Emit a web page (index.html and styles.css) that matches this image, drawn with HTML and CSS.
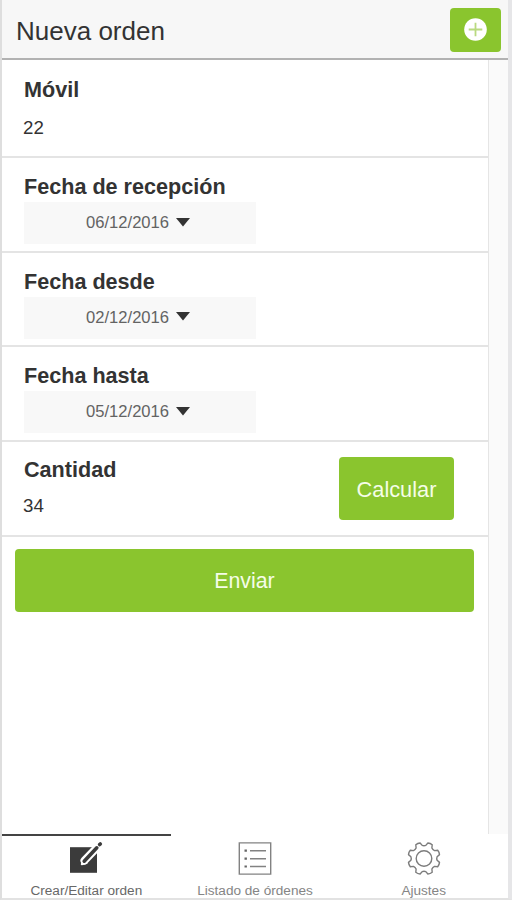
FILE: index.html
```html
<!DOCTYPE html>
<html lang="es">
<head>
<meta charset="utf-8">
<title>Nueva orden</title>
<link rel="stylesheet" href="styles.css">
</head>
<body>
<div class="app">
  <header class="header">
    <h1 class="title">Nueva orden</h1>
    <button class="add" aria-label="Agregar">
      <svg width="24" height="24" viewBox="0 0 24 24"><circle cx="11.5" cy="11.5" r="11.3" fill="#fff"/><path d="M11.5 4.7v13.6M4.7 11.5h13.6" stroke="#b9da80" stroke-width="1.8"/></svg>
    </button>
  </header>
  <main class="content">
    <div class="form">
      <section class="row row-first">
        <h2 class="label">Móvil</h2>
        <p class="value">22</p>
      </section>
      <section class="row row-date">
        <h2 class="label">Fecha de recepción</h2>
        <div class="date"><span>06/12/2016</span><svg class="caret" width="14" height="9" viewBox="0 0 14 9"><path d="M0 0h14L7 8.5z"/></svg></div>
      </section>
      <section class="row row-date">
        <h2 class="label">Fecha desde</h2>
        <div class="date"><span>02/12/2016</span><svg class="caret" width="14" height="9" viewBox="0 0 14 9"><path d="M0 0h14L7 8.5z"/></svg></div>
      </section>
      <section class="row row-date">
        <h2 class="label">Fecha hasta</h2>
        <div class="date"><span>05/12/2016</span><svg class="caret" width="14" height="9" viewBox="0 0 14 9"><path d="M0 0h14L7 8.5z"/></svg></div>
      </section>
      <section class="row row-amount">
        <div>
          <h2 class="label">Cantidad</h2>
          <p class="value">34</p>
        </div>
        <button class="button calc">Calcular</button>
      </section>
      <button class="button send">Enviar</button>
    </div>
    <div class="gutter"></div>
  </main>
  <nav class="tabs">
    <a class="tab active">
      <svg width="34" height="34" viewBox="0 0 34 34"><path d="M1 6.2h27v25.6H1z" fill="#3b3b3b"/><path d="M15.5 19.5L28 6.5" stroke="#fff" stroke-width="8" stroke-linecap="round"/><path d="M12.8 23.2l1.2-4.2L17.5 22z" fill="#fff" stroke="#fff" stroke-width="2" stroke-linejoin="round"/><path d="M15.2 20.2L27.8 6.8M30.6 3.6l.7-.7" fill="none" stroke="#3b3b3b" stroke-width="3.6" stroke-linecap="round"/></svg>
      <span>Crear/Editar orden</span>
    </a>
    <a class="tab">
      <svg width="34" height="34" viewBox="0 0 34 34" fill="none" stroke="#828282" stroke-width="1.4"><path d="M1.3 1.9h31.4v31.2H1.3z"/><path d="M12 9.7h16M12 17.7h16M12 25.5h16"/><path d="M6.5 9.7h2.4M6.5 17.7h2.4M6.5 25.5h2.4" stroke="#666" stroke-width="2.2"/></svg>
      <span>Listado de órdenes</span>
    </a>
    <a class="tab">
      <svg width="34" height="34" viewBox="0 0 34 34" fill="none" stroke="#7c7c7c" stroke-width="1.4" stroke-linejoin="round"><circle cx="17" cy="17.5" r="7.8"/><path transform="translate(0 .5)" d="M15.2 3.9Q17 4.6 18.8 3.9L20.9 1.5Q23.4 1.7 25.2 3.3L24.9 6.5Q25.7 8.3 27.5 9.1L30.7 8.8Q32.3 10.6 32.5 13.1L30.1 15.2Q29.4 17 30.1 18.8L32.5 20.9Q32.3 23.4 30.7 25.2L27.5 24.9Q25.7 25.7 24.9 27.5L25.2 30.7Q23.4 32.3 20.9 32.5L18.8 30.1Q17 29.4 15.2 30.1L13.1 32.5Q10.6 32.3 8.8 30.7L9.1 27.5Q8.3 25.7 6.5 24.9L3.3 25.2Q1.7 23.4 1.5 20.9L3.9 18.8Q4.6 17 3.9 15.2L1.5 13.1Q1.7 10.6 3.3 8.8L6.5 9.1Q8.3 8.3 9.1 6.5L8.8 3.3Q10.6 1.7 13.1 1.5Z"/></svg>
      <span>Ajustes</span>
    </a>
  </nav>
</div>
</body>
</html>
```
FILE: styles.css
```css
* { box-sizing: border-box; }
body {
  margin: 0;
  font-family: "Liberation Sans", Arial, sans-serif;
  color: #333;
}
h1, h2, p { margin: 0; font-weight: normal; }
button { border: 0; padding: 0; font-family: inherit; }
.app {
  width: 512px;
  height: 900px;
  display: flex;
  flex-direction: column;
  background: #fff;
  border-left: 2px solid #dedede;
  border-right: 4px solid #e6e6e8;
  border-bottom: 2px solid #e2e2e2;
}
.header {
  height: 60px;
  flex: none;
  display: flex;
  justify-content: space-between;
  align-items: flex-start;
  padding: 7.5px 7px 0 14px;
  background: #f7f7f7;
  border-bottom: 2px solid #b2b2b2;
}
.title { font-size: 26px; line-height: 46px; }
.add {
  width: 51px;
  height: 44px;
  display: grid;
  place-items: center;
  border-radius: 4px;
  background: #8ac52e;
}
.content { flex: 1; min-height: 0; display: flex; }
.form { flex: 1; }
.gutter { width: 20px; background: #fafafa; border-left: 1px solid #e5e5e5; }
.row { border-bottom: 2px solid #e4e4e4; padding-left: 22px; }
.row-first { height: 98px; padding-top: 17px; }
.row-date { height: 94.5px; padding-top: 16px; }
.row-amount {
  height: 95px;
  display: flex;
  justify-content: space-between;
  padding-top: 15px;
  padding-right: 34px;
}
.label { font-size: 21.6px; line-height: 26px; font-weight: bold; }
.value { font-size: 18.7px; line-height: 24px; margin-top: 13px; margin-left: -1px; }
.row-amount .value { margin-top: 11px; }
.date {
  width: 232px;
  height: 42px;
  margin-top: 2px;
  padding-left: 62px;
  display: flex;
  align-items: center;
  gap: 7px;
  background: #f8f8f8;
  color: #636363;
  font-size: 16.6px;
}
.caret { fill: #333; margin-bottom: 2px; }
.button { border-radius: 4px; background: #8ac52e; color: #f5fde8; }
.calc { width: 115px; height: 63px; padding-top: 3px; font-size: 21.8px; }
.send { display: block; width: 459px; height: 63px; margin: 12px 0 0 13px; padding-top: 3px; font-size: 21.3px; }
.tabs { height: 64px; flex: none; display: flex; }
.tab {
  width: 168.7px;
  display: flex;
  flex-direction: column;
  align-items: center;
  padding-top: 5px;
  border-top: 2px solid transparent;
  color: #858585;
  font-size: 13.6px;
  line-height: 16px;
}
.tab svg { flex: none; }
.tab span { margin-top: 8px; white-space: nowrap; transform: scaleY(.9); }
.tab.active { border-top-color: #444; color: #686868; }
```
